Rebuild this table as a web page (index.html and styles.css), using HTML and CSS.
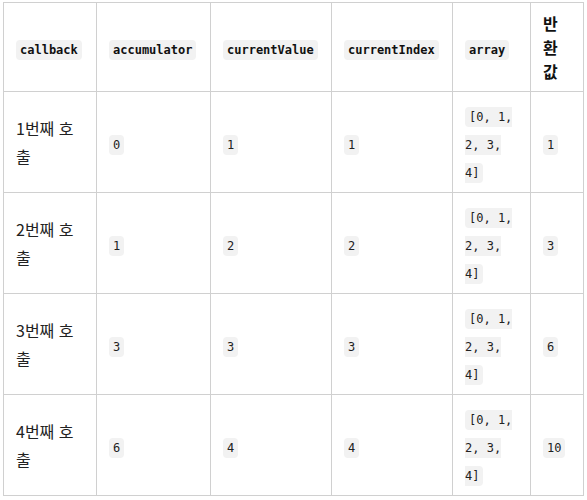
FILE: index.html
```html
<!DOCTYPE html>
<html lang="ko">
<head>
<meta charset="utf-8">
<link rel="stylesheet" href="styles.css">
</head>
<body>
<table class="calls">
  <colgroup>
    <col class="c1"><col class="c2"><col class="c3"><col class="c4"><col class="c5"><col class="c6">
  </colgroup>
  <thead>
    <tr>
      <th><code>callback</code></th>
      <th><code>accumulator</code></th>
      <th><code>currentValue</code></th>
      <th><code>currentIndex</code></th>
      <th><code>array</code></th>
      <th>반환값</th>
    </tr>
  </thead>
  <tbody>
    <tr>
      <td>1번째 호출</td>
      <td><code>0</code></td>
      <td><code>1</code></td>
      <td><code>1</code></td>
      <td><code>[0, 1, 2, 3, 4]</code></td>
      <td><code>1</code></td>
    </tr>
    <tr>
      <td>2번째 호출</td>
      <td><code>1</code></td>
      <td><code>2</code></td>
      <td><code>2</code></td>
      <td><code>[0, 1, 2, 3, 4]</code></td>
      <td><code>3</code></td>
    </tr>
    <tr>
      <td>3번째 호출</td>
      <td><code>3</code></td>
      <td><code>3</code></td>
      <td><code>3</code></td>
      <td><code>[0, 1, 2, 3, 4]</code></td>
      <td><code>6</code></td>
    </tr>
    <tr>
      <td>4번째 호출</td>
      <td><code>6</code></td>
      <td><code>4</code></td>
      <td><code>4</code></td>
      <td><code>[0, 1, 2, 3, 4]</code></td>
      <td><code>10</code></td>
    </tr>
  </tbody>
</table>
</body>
</html>
```

FILE: styles.css
```css
html, body {
  margin: 0;
  background: #ffffff;
}
body {
  padding: 2px 4px 0 3px;
  font-family: "Noto Sans CJK KR", "Noto Sans", sans-serif;
  font-size: 16px;
  color: #222222;
}
.calls {
  width: 580px;
  border-collapse: collapse;
  table-layout: fixed;
}
.c1 { width: 93px; }
.c2 { width: 114px; }
.c3 { width: 121px; }
.c4 { width: 121px; }
.c5 { width: 78px; }
.c6 { width: 53px; }
.calls th,
.calls td {
  border: 1px solid #d0d0d0;
  padding: 8px 12px;
  text-align: left;
  vertical-align: middle;
}
.calls th {
  font-weight: 700;
  line-height: 24px;
  color: #111111;
}
.calls td {
  line-height: 28px;
}
.calls code {
  font-family: "DejaVu Sans Mono", "Liberation Mono", monospace;
  font-size: 12px;
  line-height: 12px;
  background: #f2f2f2;
  border-radius: 4px;
  padding: 3px 4px;
  color: #222222;
}
.calls th code {
  font-weight: 700;
  color: #111111;
}
```
